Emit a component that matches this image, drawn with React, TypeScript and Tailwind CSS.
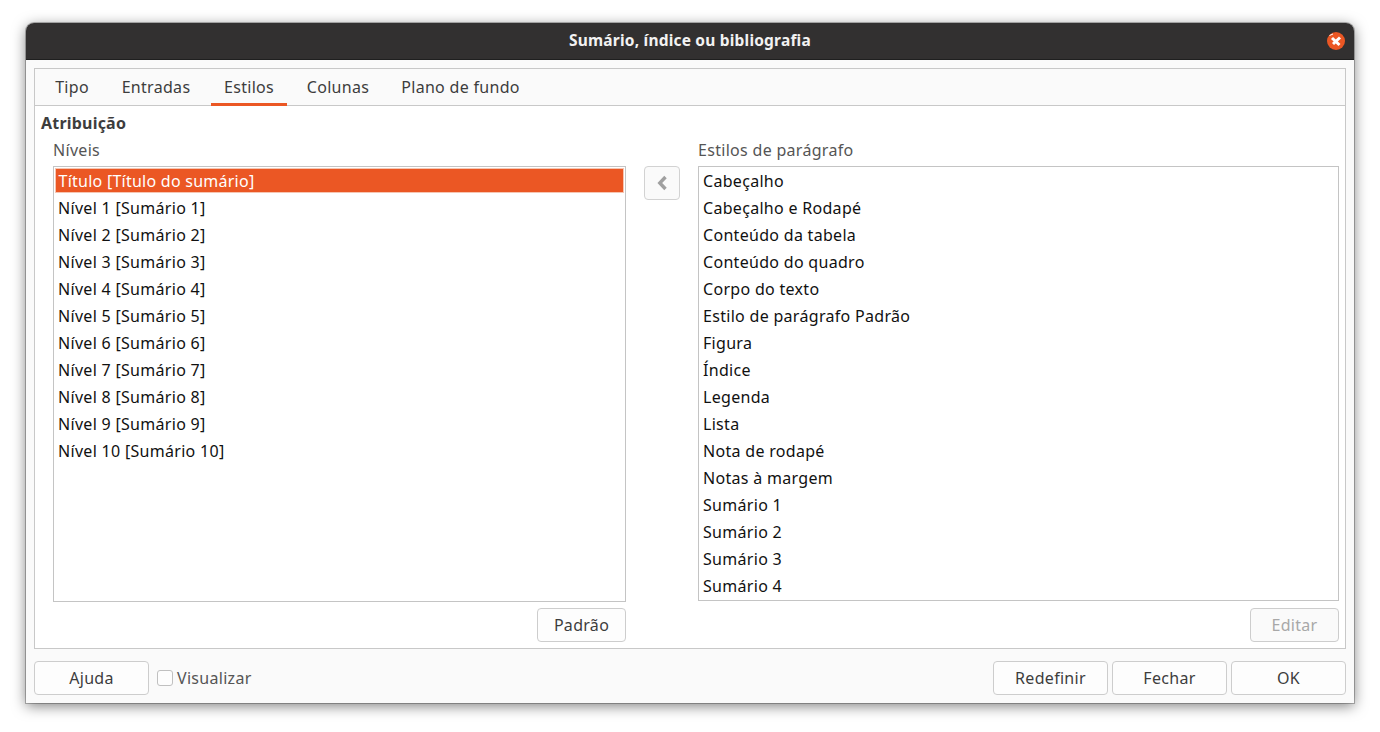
const font = "font-['Noto_Sans','Open_Sans',sans-serif]";

const levels = [
  "Título [Título do sumário]",
  "Nível 1 [Sumário 1]",
  "Nível 2 [Sumário 2]",
  "Nível 3 [Sumário 3]",
  "Nível 4 [Sumário 4]",
  "Nível 5 [Sumário 5]",
  "Nível 6 [Sumário 6]",
  "Nível 7 [Sumário 7]",
  "Nível 8 [Sumário 8]",
  "Nível 9 [Sumário 9]",
  "Nível 10 [Sumário 10]",
];

const styles = [
  "Cabeçalho",
  "Cabeçalho e Rodapé",
  "Conteúdo da tabela",
  "Conteúdo do quadro",
  "Corpo do texto",
  "Estilo de parágrafo Padrão",
  "Figura",
  "Índice",
  "Legenda",
  "Lista",
  "Nota de rodapé",
  "Notas à margem",
  "Sumário 1",
  "Sumário 2",
  "Sumário 3",
  "Sumário 4",
];

const tabs = [
  { label: "Tipo", width: "w-[58px]" },
  { label: "Entradas", width: "w-[94px]" },
  { label: "Estilos", width: "w-[76px]", active: true },
  { label: "Colunas", width: "w-[86px]" },
  { label: "Plano de fundo", width: "w-[143px]" },
];

function Button({ label, width, disabled }: { label: string; width: string; disabled?: boolean }) {
  return (
    <button
      type="button"
      className={`flex h-[34px] ${width} items-center justify-center rounded-[4px] border border-[#cdcdcd] text-[16px] tracking-[0.3px] ${
        disabled ? "bg-[#fafafa] text-[#a8a8a8]" : "bg-[#fdfdfd] text-[#3d3d3d]"
      }`}
    >
      {label}
    </button>
  );
}

export default function App() {
  return (
    <div className={`h-[732px] w-[1380px] overflow-hidden bg-white pl-[26px] pt-[23px] ${font}`}>
      <div className="flex h-[680px] w-[1328px] flex-col rounded-t-[8px] bg-[#fafafa] shadow-[0_0_0_1px_rgba(0,0,0,0.25),0_3px_14px_rgba(0,0,0,0.5)]">
        <div className="flex h-[37px] shrink-0 items-center rounded-t-[8px] border-b border-[#1f1f1f] bg-[#323030] pr-[9px]">
          <div className="flex-1 pl-[27px] text-center text-[15.5px] font-bold tracking-[0.2px] text-[#f2f2f2]">
            Sumário, índice ou bibliografia
          </div>
          <svg width="18" height="18" viewBox="0 0 18 18" className="shrink-0">
            <circle cx="9" cy="9" r="9" fill="#eb5724" />
            <path d="M5 6 12.5 13M13 5.5 6 12" stroke="#fff" strokeWidth="3" />
            <path d="M2.5 3.5 6 2" stroke="#fff" strokeWidth="1" />
          </svg>
        </div>

        <div className="ml-2 mt-2 flex h-[581px] w-[1312px] flex-col border border-[#c8c8c8] bg-white">
          <div className="flex h-[37px] shrink-0 gap-2 border-b border-[#c8c8c8] bg-[#fafafa] pl-2">
            {tabs.map((tab) => (
              <div
                key={tab.label}
                className={`flex h-[37px] ${tab.width} items-center justify-center text-[16px] tracking-[0.3px] text-[#3d3d3d] ${
                  tab.active ? "border-b-[3px] border-[#eb5724] pt-px" : "pb-[2px]"
                }`}
              >
                {tab.label}
              </div>
            ))}
          </div>

          <div className="flex flex-1 flex-col pl-[6px] pr-[6px]">
            <div className="mt-[6px] h-[22px] text-[16px] font-bold leading-[22px] tracking-[0.2px] text-[#3d3d3d]">Atribuição</div>
            <div className="ml-3 flex flex-1">
              <div className="flex w-[573px] flex-col">
                <div className="mt-[5px] h-[22px] text-[16px] leading-[22px] tracking-[0.3px] text-[#555]">Níveis</div>
                <div className="mt-[5px] h-[436px] border border-[#c4c4c4] bg-white pt-px">
                  {levels.map((level, i) => (
                    <div
                      key={level}
                      className={
                        i === 0
                          ? "mx-px mb-[2px] flex h-[25px] items-center border border-[#f6c5b2] bg-[#eb5724] pl-[2.5px] text-[16px] tracking-[0.25px] text-white"
                          : "flex h-[27px] items-center pb-[2px] pl-1 text-[16px] tracking-[0.3px] text-[#111]"
                      }
                    >
                      {level}
                    </div>
                  ))}
                </div>
                <div className="mt-[6px] flex justify-end">
                  <Button label="Padrão" width="w-[89px]" />
                </div>
              </div>

              <div className="ml-[18px] w-[36px] pt-[32px]">
                <div className="flex h-[34px] w-[36px] items-center justify-center rounded-[4px] border border-[#d2d2d2] bg-[#fafafa]">
                  <svg width="14" height="16" viewBox="0 0 14 16">
                    <path d="M10.5 2 4.8 8l5.7 6" fill="none" stroke="#a0a0a0" strokeWidth="3.4" />
                  </svg>
                </div>
              </div>

              <div className="ml-[18px] flex w-[641px] flex-col">
                <div className="mt-[5px] h-[22px] text-[16px] leading-[22px] tracking-[0.3px] text-[#555]">Estilos de parágrafo</div>
                <div className="mt-[5px] h-[435px] overflow-hidden border border-[#c4c4c4] bg-white pt-px">
                  {styles.map((style) => (
                    <div key={style} className="flex h-[27px] items-center pb-[2px] pl-1 text-[16px] tracking-[0.3px] text-[#111]">
                      {style}
                    </div>
                  ))}
                </div>
                <div className="mt-[7px] flex justify-end">
                  <Button label="Editar" width="w-[89px]" disabled />
                </div>
              </div>
            </div>
          </div>
        </div>

        <div className="ml-2 mt-3 flex w-[1312px] items-center">
          <Button label="Ajuda" width="w-[115px]" />
          <div className="ml-[8px] h-4 w-4 rounded-[3px] border border-[#c0c0c0] bg-[#fdfdfd]" />
          <div className="ml-[4px] text-[16px] tracking-[0.3px] text-[#555]">Visualizar</div>
          <div className="ml-auto flex gap-1">
            <Button label="Redefinir" width="w-[115px]" />
            <Button label="Fechar" width="w-[115px]" />
            <Button label="OK" width="w-[115px]" />
          </div>
        </div>
      </div>
    </div>
  );
}
